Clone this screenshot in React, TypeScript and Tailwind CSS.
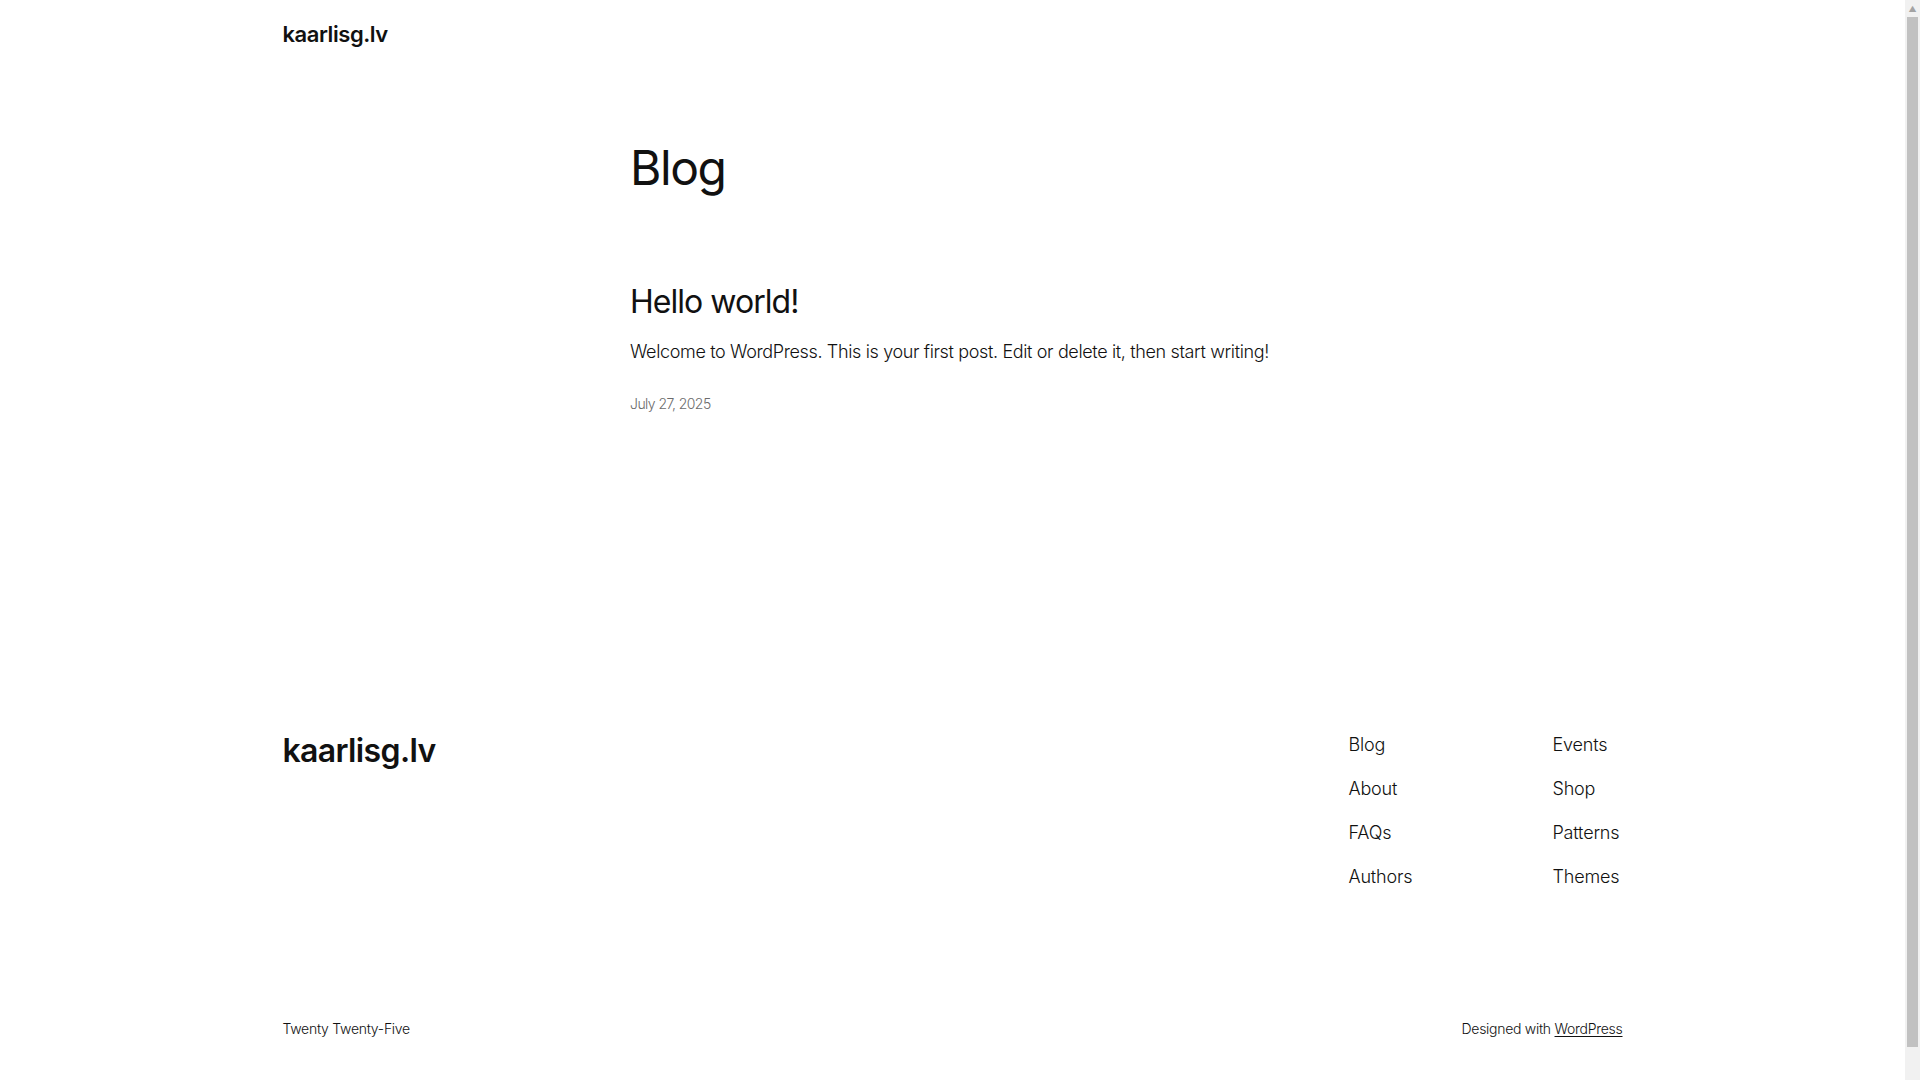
const navLeft = ['Blog', 'About', 'FAQs', 'Authors'];
const navRight = ['Events', 'Shop', 'Patterns', 'Themes'];

const NavColumn = ({ items, className }: { items: string[]; className: string }) => (
  <ul className={`flex flex-col gap-[19px] ${className}`}>
    {items.map((item) => (
      <li key={item}>
        <a href="#" className="block whitespace-nowrap text-[18px] leading-[25px] font-light tracking-[-0.01em]">
          {item}
        </a>
      </li>
    ))}
  </ul>
);

export default function App() {
  return (
    <div className="flex min-h-screen bg-white text-[#111111] font-['Inter','Noto_Sans',sans-serif] antialiased">
      <div className="flex-1">
        {/* Header */}
        <header className="mx-auto w-[1340px] pt-[19px]">
          <a href="#" className="block text-[22px] leading-[31px] font-semibold tracking-[-0.02em]">
            kaarlisg.lv
          </a>
        </header>

        {/* Blog listing */}
        <main className="mx-auto w-[645px] pt-[91px]">
          <h1 className="text-[48px] leading-[54px] font-normal tracking-[-0.03em]">Blog</h1>

          <article className="mt-[89px]">
            <h2 className="text-[32px] leading-[36px] font-normal tracking-[-0.03em]">
              <a href="#">Hello world!</a>
            </h2>
            <p className="mt-[19px] whitespace-nowrap text-[18px] leading-[25px] font-light tracking-[-0.02em]">
              Welcome to WordPress. This is your first post. Edit or delete it, then start writing!
            </p>
            <time className="mt-[29px] block text-[14px] leading-[21px] font-light tracking-[-0.04em] text-[#6b6b6b]">
              July 27, 2025
            </time>
          </article>
        </main>

        {/* Footer */}
        <footer className="mx-auto w-[1340px] pt-[318px] pb-[58px]">
          <div className="flex items-start justify-between">
            <a href="#" className="block text-[32px] leading-[37px] font-semibold tracking-[-0.02em]">
              kaarlisg.lv
            </a>
            <nav className="flex">
              <NavColumn items={navLeft} className="w-[204px]" />
              <NavColumn items={navRight} className="w-[70px]" />
            </nav>
          </div>

          <div className="mt-[129px] flex items-center justify-between text-[14px] leading-[21px] font-light tracking-[-0.02em]">
            <span>Twenty Twenty-Five</span>
            <span>
              Designed with{' '}
              <a href="#" className="underline underline-offset-2">
                WordPress
              </a>
            </span>
          </div>
        </footer>
      </div>

      {/* browser scrollbar gutter */}
      <div className="flex w-[15px] flex-col items-center bg-[#f1f1f1]">
        <span className="mt-[4px] text-[8px] leading-[10px] text-[#a3a3a3]">▲</span>
        <div className="mt-[3px] h-[1030px] w-[11px] bg-[#c1c1c1]" />
      </div>
    </div>
  );
}
